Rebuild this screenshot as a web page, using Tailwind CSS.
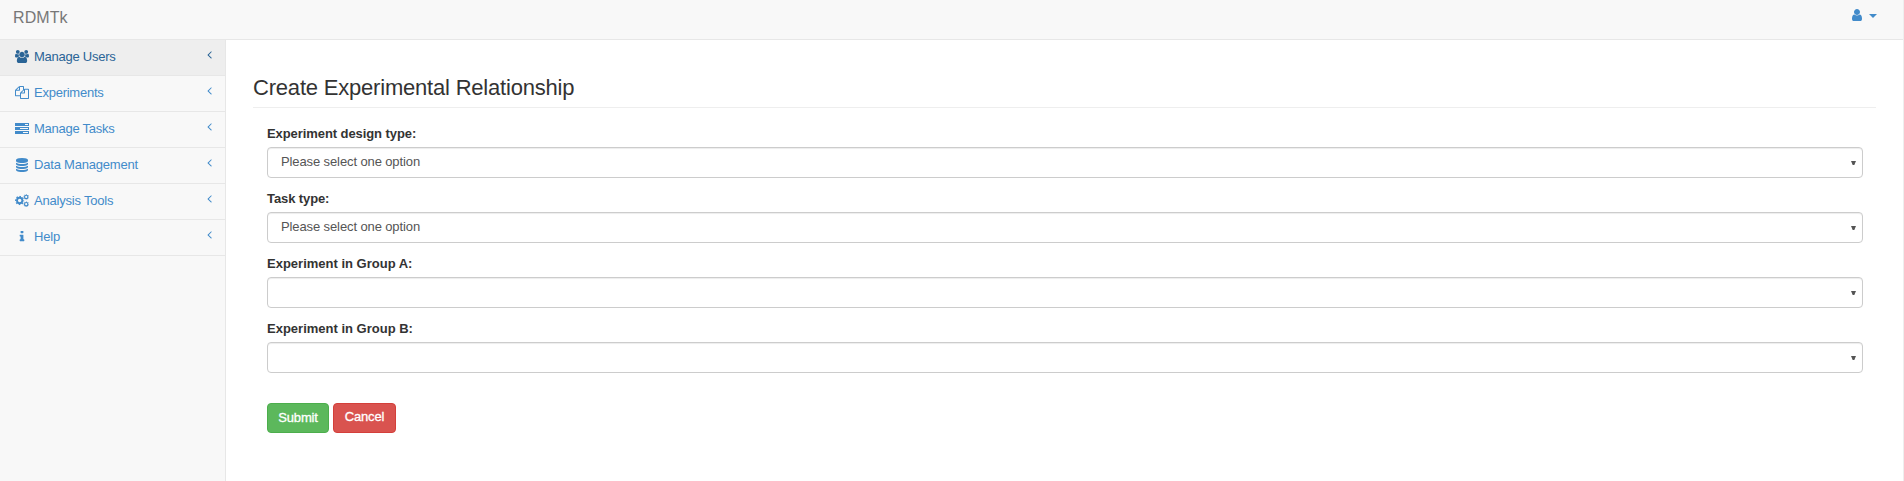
<!DOCTYPE html>
<html lang="en">
<head>
<meta charset="utf-8">
<title>RDMTk</title>
<script src="https://cdn.jsdelivr.net/npm/@tailwindcss/browser@4"></script>
</head>
<body class="h-[481px] overflow-hidden bg-[#f8f8f8] font-['Liberation_Sans',Arial,sans-serif] text-[13px] leading-[18px] text-[#333]">
<svg class="hidden">
  <symbol id="angle" viewBox="0 0 1792 1792"><path d="M1203 544q0 13-10 23l-393 393 393 393q10 10 10 23t-10 23l-50 50q-10 10-23 10t-23-10l-466-466q-10-10-10-23t10-23l466-466q10-10 23-10t23 10l50 50q10 10 10 23z"/></symbol>
  <symbol id="gear" viewBox="0 0 1280 1280"><circle cx="640" cy="640" r="370" fill="none" stroke="currentColor" stroke-width="260"/><circle cx="640" cy="640" r="560" fill="none" stroke="currentColor" stroke-width="160" stroke-dasharray="220 219.8" stroke-dashoffset="110"/></symbol>
</svg>
<div class="flex h-full flex-col border-r border-[#eee]">
  <header class="flex h-10 shrink-0 justify-between border-b border-[#e7e7e7] pl-[13px] pr-[26px]">
    <a class="pt-[9px] text-base leading-[18px] tracking-[0.1px] text-[#777]">RDMTk</a>
    <div class="flex items-start gap-[7px] pt-[9px] text-[#428bca]">
      <svg class="h-3 w-[10px]" viewBox="256 128 1280 1536" preserveAspectRatio="none" fill="currentColor"><path d="M1536 1399q0 109-62.500 187t-150.500 78h-854q-88 0-150.500-78t-62.500-187q0-85 8.500-160.500t31.500-152 58.500-131 94-89 134.500-34.500q131 128 313 128t313-128q76 0 134.500 34.500t94 89 58.500 131 31.500 152 8.500 160.500zm-256-887q0 159-112.500 271.500t-271.500 112.500-271.500-112.500-112.500-271.500 112.500-271.500 271.500-112.500 271.500 112.500 112.500 271.500z"/></svg>
      <svg class="mt-[5px] h-1 w-2" viewBox="0 0 8 4" fill="currentColor"><path d="M0 0h8L4 4z"/></svg>
    </div>
  </header>
  <div class="flex min-h-0 flex-1">
    <nav class="w-[225px] shrink-0 text-[#428bca]">
      <a class="flex h-9 items-center border-b border-[#e7e7e7] bg-[#eee] pb-[2px] pl-[15px] pr-[9px] text-[#2a6496]">
        <svg class="h-[13px] w-[14px]" viewBox="0 0 1920 1792" preserveAspectRatio="none" fill="currentColor"><path d="M593 896q-162 5-265 128h-134q-82 0-138-40.500t-56-118.500q0-353 124-353 6 0 43.500 21t97.500 42.500 119 21.500q67 0 133-23-5 37-5 66 0 139 81 256zm1071 637q0 120-73 189.500t-194 69.500h-874q-121 0-194-69.500t-73-189.500q0-53 3.500-103.500t14-109 26.500-108.500 43-97.500 62-81 85.500-53.500 111.500-20q10 0 43 21.500t73 48 107 48 135 21.500 135-21.500 107-48 73-48 43-21.500q61 0 111.500 20t85.500 53.500 62 81 43 97.500 26.500 108.500 14 109 3.500 103.500zm-1024-1277q0 106-75 181t-181 75-181-75-75-181 75-181 181-75 181 75 75 181zm704 384q0 159-112.500 271.500t-271.500 112.500-271.500-112.500-112.500-271.500 112.500-271.500 271.500-112.500 271.500 112.500 112.500 271.500zm576 225q0 78-56 118.500t-138 40.500h-134q-103-123-265-128 81-117 81-256 0-29-5-66 66 23 133 23 59 0 119-21.500t97.500-42.500 43.500-21q124 0 124 353zm-128-609q0 106-75 181t-181 75-181-75-75-181 75-181 181-75 181 75 75 181z"/></svg>
        <span class="ml-[5px] tracking-[-0.25px]">Manage Users</span>
        <svg class="mb-[5px] ml-auto size-[13px]" fill="currentColor"><use href="#angle"/></svg>
      </a>
      <a class="flex h-9 items-center border-b border-[#e7e7e7] pb-[2px] pl-[15px] pr-[9px]">
        <svg class="h-[13px] w-[14px]" viewBox="0 0 1792 1792" preserveAspectRatio="none" fill="currentColor"><path d="M1696 384q40 0 68 28t28 68v1216q0 40-28 68t-68 28h-960q-40 0-68-28t-28-68v-288h-544q-40 0-68-28t-28-68v-672q0-40 20-88t48-76l408-408q28-28 76-48t88-20h416q40 0 68 28t28 68v328q68-40 128-40h416zm-544 213l-299 299h299v-299zm-640-384l-299 299h299v-299zm196 647l316-316v-416h-384v416q0 40-28 68t-68 28h-416v640h512v-256q0-40 20-88t48-76zm956 804v-1152h-384v416q0 40-28 68t-68 28h-416v640h896z"/></svg>
        <span class="ml-[5px] tracking-[-0.25px]">Experiments</span>
        <svg class="mb-[5px] ml-auto size-[13px]" fill="currentColor"><use href="#angle"/></svg>
      </a>
      <a class="flex h-9 items-center border-b border-[#e7e7e7] pb-[2px] pl-[15px] pr-[9px]">
        <svg class="h-[11px] w-[14px]" viewBox="0 0 14 11" fill="currentColor"><path fill-rule="evenodd" d="M0 0h14v3H0zM10 1v1h3V1zM0 4h14v3H0zM5 5v1h8V5zM0 8h14v3H0zM8 9v1h5V9z"/></svg>
        <span class="ml-[5px] tracking-[-0.25px]">Manage Tasks</span>
        <svg class="mb-[5px] ml-auto size-[13px]" fill="currentColor"><use href="#angle"/></svg>
      </a>
      <a class="flex h-9 items-center border-b border-[#e7e7e7] pb-[2px] pl-[15px] pr-[9px]">
        <svg class="size-[14px]" viewBox="0 0 1792 1792" fill="currentColor"><path d="M896 768q237 0 443-43t325-127v170q0 69-103 128t-280 93.500-385 34.500-385-34.500-280-93.500-103-128v-170q119 84 325 127t443 43zm0 768q237 0 443-43t325-127v170q0 69-103 128t-280 93.500-385 34.500-385-34.500-280-93.500-103-128v-170q119 84 325 127t443 43zm0-384q237 0 443-43t325-127v170q0 69-103 128t-280 93.500-385 34.500-385-34.500-280-93.500-103-128v-170q119 84 325 127t443 43zm0-1152q208 0 385 34.500t280 93.500 103 128v128q0 69-103 128t-280 93.500-385 34.500-385-34.500-280-93.500-103-128v-128q0-69 103-128t280-93.500 385-34.500z"/></svg>
        <span class="ml-[5px] tracking-[-0.2px]">Data Management</span>
        <svg class="mb-[5px] ml-auto size-[13px]" fill="currentColor"><use href="#angle"/></svg>
      </a>
      <a class="flex h-9 items-center border-b border-[#e7e7e7] pb-[2px] pl-[15px] pr-[9px]">
        <svg class="h-[13px] w-[14px]" viewBox="0 0 1920 1792"><use href="#gear" x="0" y="256" width="1280" height="1280"/><use href="#gear" x="1140" y="0" width="800" height="800"/><use href="#gear" x="1140" y="1000" width="800" height="800"/></svg>
        <span class="ml-[5px] tracking-[-0.2px]">Analysis Tools</span>
        <svg class="mb-[5px] ml-auto size-[13px]" fill="currentColor"><use href="#angle"/></svg>
      </a>
      <a class="flex h-9 items-center border-b border-[#e7e7e7] pb-[2px] pl-[15px] pr-[9px]">
        <svg class="h-[13px] w-[14px]" viewBox="0 0 1792 1792" fill="currentColor"><path d="M1216 1344v128q0 26-19 45t-45 19h-512q-26 0-45-19t-19-45v-128q0-26 19-45t45-19h64v-384h-64q-26 0-45-19t-19-45v-128q0-26 19-45t45-19h384q26 0 45 19t19 45v576h64q26 0 45 19t19 45zm-128-1152v192q0 26-19 45t-45 19h-256q-26 0-45-19t-19-45v-192q0-26 19-45t45-19h256q26 0 45 19t19 45z"/></svg>
        <span class="ml-[5px] tracking-[-0.15px]">Help</span>
        <svg class="mb-[5px] ml-auto size-[13px]" fill="currentColor"><use href="#angle"/></svg>
      </a>
    </nav>
    <main class="flex-1 border-l border-[#e7e7e7] bg-white pl-[27px] pr-[27px] pt-[35px]">
      <h1 class="h-[33px] border-b border-[#eee] pt-px text-[22px] leading-6 tracking-[-0.2px]">Create Experimental Relationship</h1>
      <form class="pl-[14px] pr-[13px] pt-4">
        <div class="h-[65px]">
          <label class="block h-[23px] pt-px font-bold tracking-[-0.08px]">Experiment design type:</label>
          <div class="flex h-[31px] items-center justify-between rounded border border-[#ccc] pl-[13px] pr-[6px] text-[#555] shadow-[inset_0_1px_1px_rgba(0,0,0,0.075)]"><span class="mb-[2px] tracking-[-0.11px]">Please select one option</span><svg class="h-[4px] w-[5px]" viewBox="0 0 5 4" fill="#555"><path d="M0 0h5L3.300 4H1.700z"/></svg></div>
        </div>
        <div class="h-[65px]">
          <label class="block h-[23px] pt-px font-bold tracking-[-0.1px]">Task type:</label>
          <div class="flex h-[31px] items-center justify-between rounded border border-[#ccc] pl-[13px] pr-[6px] text-[#555] shadow-[inset_0_1px_1px_rgba(0,0,0,0.075)]"><span class="mb-[2px] tracking-[-0.11px]">Please select one option</span><svg class="h-[4px] w-[5px]" viewBox="0 0 5 4" fill="#555"><path d="M0 0h5L3.300 4H1.700z"/></svg></div>
        </div>
        <div class="h-[65px]">
          <label class="block h-[23px] pt-px font-bold">Experiment in Group A:</label>
          <div class="flex h-[31px] items-center justify-end rounded border border-[#ccc] pr-[6px] shadow-[inset_0_1px_1px_rgba(0,0,0,0.075)]"><svg class="h-[4px] w-[5px]" viewBox="0 0 5 4" fill="#555"><path d="M0 0h5L3.300 4H1.700z"/></svg></div>
        </div>
        <div class="h-[65px]">
          <label class="block h-[23px] pt-px font-bold">Experiment in Group B:</label>
          <div class="flex h-[31px] items-center justify-end rounded border border-[#ccc] pr-[6px] shadow-[inset_0_1px_1px_rgba(0,0,0,0.075)]"><svg class="h-[4px] w-[5px]" viewBox="0 0 5 4" fill="#555"><path d="M0 0h5L3.300 4H1.700z"/></svg></div>
        </div>
        <div class="flex gap-1 pt-[19px] text-white">
          <button type="button" class="h-[30px] w-[62px] rounded border border-[#4cae4c] bg-[#5cb85c] tracking-[-0.2px] [-webkit-text-stroke:0.3px_white]">Submit</button>
          <button type="button" class="h-[30px] w-[63px] rounded border border-[#d43f3a] bg-[#d9534f] pb-[2px] tracking-[-0.2px] [-webkit-text-stroke:0.3px_white]">Cancel</button>
        </div>
      </form>
    </main>
  </div>
</div>
</body>
</html>
